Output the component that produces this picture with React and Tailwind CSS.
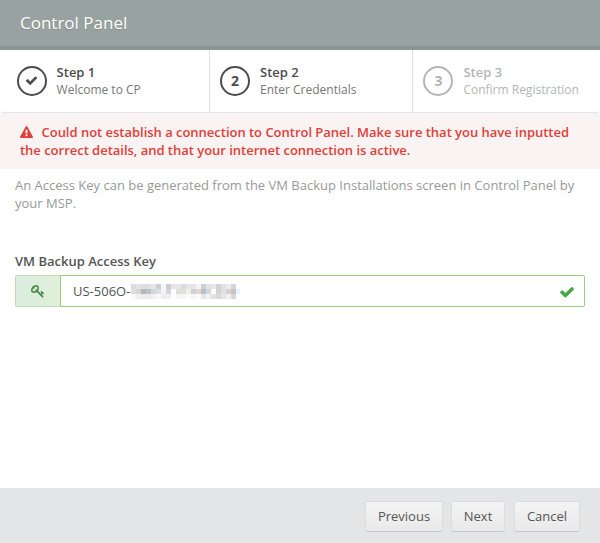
const CHECK =
  "M1671 566q0 40-28 68l-724 724-136 136q-28 28-68 28t-68-28l-136-136-362-362q-28-28-28-68t28-68l136-136q28-28 68-28t68 28l294 295 656-657q28-28 68-28t68 28l136 136q28 28 28 68z";
const WARNING =
  "M1024 1375v-190q0-14-9.5-23.5t-22.5-9.5h-192q-13 0-22.5 9.5t-9.5 23.5v190q0 14 9.5 23.5t22.5 9.5h192q13 0 22.5-9.5t9.5-23.5zm-2-374l18-459q0-12-10-19-13-11-24-11h-220q-11 0-24 11-10 7-10 21l17 457q0 10 10 16.5t24 6.5h185q14 0 23.5-6.5t10.5-16.5zm-14-934l768 1408q35 63-2 126-17 29-46.5 46t-63.5 17h-1536q-34 0-63.5-17t-46.5-46q-37-63-2-126l768-1408q17-31 47-49t65-18 65 18 47 49z";
const KEY =
  "M832 512q0-80-56-136t-136-56-136 56-56 136q0 42 19 83-41-19-83-19-80 0-136 56t-56 136 56 136 136 56 136-56 56-136q0-42-19-83 41 19 83 19 80 0 136-56t56-136zm851 704q0 17-49 66t-66 49q-9 0-28.5-16t-36.5-33-38.5-40-24.5-26l-96 96 220 220q28 28 28 68 0 42-39 81t-81 39q-40 0-68-28l-671-671q-176 131-365 131-163 0-265.5-102.5t-102.5-265.5q0-160 95-313t248-248 313-95q163 0 265.5 102.5t102.5 265.5q0 189-131 365l355 355 96-96q-3-3-26-24.5t-40-38.5-33-36.5-16-28.5q0-17 49-66t66-49q13 0 23 10 6 6 46 44.5t82 79.5 86.5 86 73 78 28.5 41z";

function Icon({ path, className }) {
  return (
    <svg viewBox="0 0 1792 1792" fill="currentColor" className={className} aria-hidden="true">
      <path d={path} />
    </svg>
  );
}

// Mosaic that hides the rest of the access key, one colour per 5px cell.
const MOSAIC = [
  ["#dcdadf", "#e2e4e4", "#e0dde0", "#dededf", "#e8e8e9", "#cecdcf", "#f6f9fb", "#cfcbd0", "#e5e3e5", "#e6e8e7", "#d8dadb", "#e3e5e5", "#e6e6ea", "#fbf4ec", "#c9d0d6", "#e1e3e3", "#e7e7e7", "#d5d0d3", "#dfe3e2", "#eceeec", "#d5d5d9"],
  ["#e0dfdd", "#d3d6d7", "#b4b7b8", "#b9c3cb", "#d5d6d8", "#dedede", "#f3f3f6", "#d6d6da", "#ffffff", "#dfe0dc", "#e0e1dc", "#eeeeea", "#cfd2dd", "#dcd6d1", "#b9c0cc", "#d4d7db", "#fdfdfd", "#d6cfcf", "#e0dfe1", "#d0d2d5", "#ccc2c1"],
  ["#fcf9f5", "#eff1f1", "#ececec", "#f0ebe7", "#efeff4", "#f9f9f9", "#eeeeee", "#f1eef2", "#ffffff", "#f4f5f5", "#f6f5f6", "#fbfbfb", "#f6f5fd", "#fbfbfb", "#e4e6e9", "#edeff1", "#e3e3e4", "#dcd9dc", "#e7e6e6", "#f1f0f0", "#d8d7da"],
];

function Mosaic() {
  return (
    <svg viewBox="0 0 109 15" className="mt-px h-[15px] w-[109px]" shapeRendering="crispEdges" aria-hidden="true">
      {MOSAIC.map((row, y) =>
        row.map((fill, x) => <rect key={`${x}-${y}`} x={x * 5} y={y * 5} width="5" height="5" fill={fill} />)
      )}
      <rect x="105" y="5" width="4" height="5" fill="#e5f4fc" />
    </svg>
  );
}

function Step({ marker, title, text, className, tone, textTone }) {
  return (
    <li className={`flex h-[62px] items-center gap-[10px] ${className}`}>
      <span
        className={`flex size-[30px] shrink-0 items-center justify-center rounded-full border-2 text-sm font-bold ${tone}`}
      >
        {marker}
      </span>
      <div className="whitespace-nowrap leading-[17px]">
        <div className={`font-semibold ${tone}`}>{title}</div>
        <div className={`text-xs leading-[17px] ${textTone}`}>{text}</div>
      </div>
    </li>
  );
}

function Button({ children, className }) {
  return (
    <button
      className={`flex h-[31px] items-center justify-center rounded-[2px] border border-[#dcdcdc] border-b-[#c8c8c8] bg-linear-to-b from-[#f4f4f4] to-[#e9e9e9] pb-px text-[#555] ${className}`}
    >
      {children}
    </button>
  );
}

export default function App() {
  return (
    <div className="flex h-[543px] w-[600px] flex-col bg-white font-['Open_Sans',sans-serif] text-[13px] leading-[18px] text-[#555]">
      <header className="flex h-[50px] items-center border-b-4 border-[#8b9492] bg-[#98a3a1] pl-5">
        <h1 className="text-[17px] text-white [text-shadow:0_1px_1px_rgba(0,0,0,0.15)]">Control Panel</h1>
      </header>

      <ol className="flex h-[63px] rounded-b-[3px] border-b border-[#e2e3e4]">
        <Step
          marker={<Icon path={CHECK} className="-mt-[2px] size-[13px]" />}
          title="Step 1"
          text="Welcome to CP"
          className="w-[210px] border-r border-[#e0e0e2] pl-[16.6px]"
          tone="border-[#4c4c4c] text-[#4c4c4c]"
          textTone="text-[#777]"
        />
        <Step
          marker="2"
          title="Step 2"
          text="Enter Credentials"
          className="w-[203px] border-r border-[#e0e0e2] pl-[10px]"
          tone="border-[#4c4c4c] text-[#4c4c4c]"
          textTone="text-[#777]"
        />
        <Step
          marker="3"
          title="Step 3"
          text="Confirm Registration"
          className="w-[187px] pl-[10.4px]"
          tone="border-[#b5b5b5] text-[#b5b5b5]"
          textTone="text-[#b5b5b5]"
        />
      </ol>

      <div className="h-14 bg-[#faf3f3] px-5 pt-[10px] font-semibold tracking-[-0.02px] text-[#e04038]">
        <Icon path={WARNING} className="mr-[8.5px] -mt-[3px] inline-block size-[13px]" />
        Could not establish a connection to Control Panel. Make sure that you have inputted
        <br />
        the correct details, and that your internet connection is active.
      </div>

      <main className="grow px-[15px] pt-[7px]">
        <p className="text-[#999]">
          An Access Key can be generated from the VM Backup Installations screen in Control Panel by
          <br />
          your MSP.
        </p>
        <label className="mt-10 block font-semibold text-[#555]">VM Backup Access Key</label>
        <div className="mt-[5px] flex h-8">
          <span className="flex w-[45px] items-center justify-center rounded-l-[2px] border border-r-0 border-[#bfdcb4] bg-linear-to-r from-[#dcecdf] to-[#dff0d8] text-[#468847]">
            <Icon path={KEY} className="size-[14px]" />
          </span>
          <div className="flex grow items-center rounded-r-[2px] border border-[#9dcc7b] pr-[9px] pl-3">
            <span className="w-[58px]">US-506O-</span>
            <Mosaic />
            <Icon path={CHECK} className="mt-[2px] ml-auto size-4 text-[#43a843]" />
          </div>
        </div>
      </main>

      <footer className="flex h-[55px] items-center justify-end gap-2 bg-[#e4e5e7] pr-5 pt-[2px]">
        <Button className="w-[78px]">Previous</Button>
        <Button className="w-[54px]">Next</Button>
        <Button className="ml-px w-[66px]">Cancel</Button>
      </footer>
    </div>
  );
}
